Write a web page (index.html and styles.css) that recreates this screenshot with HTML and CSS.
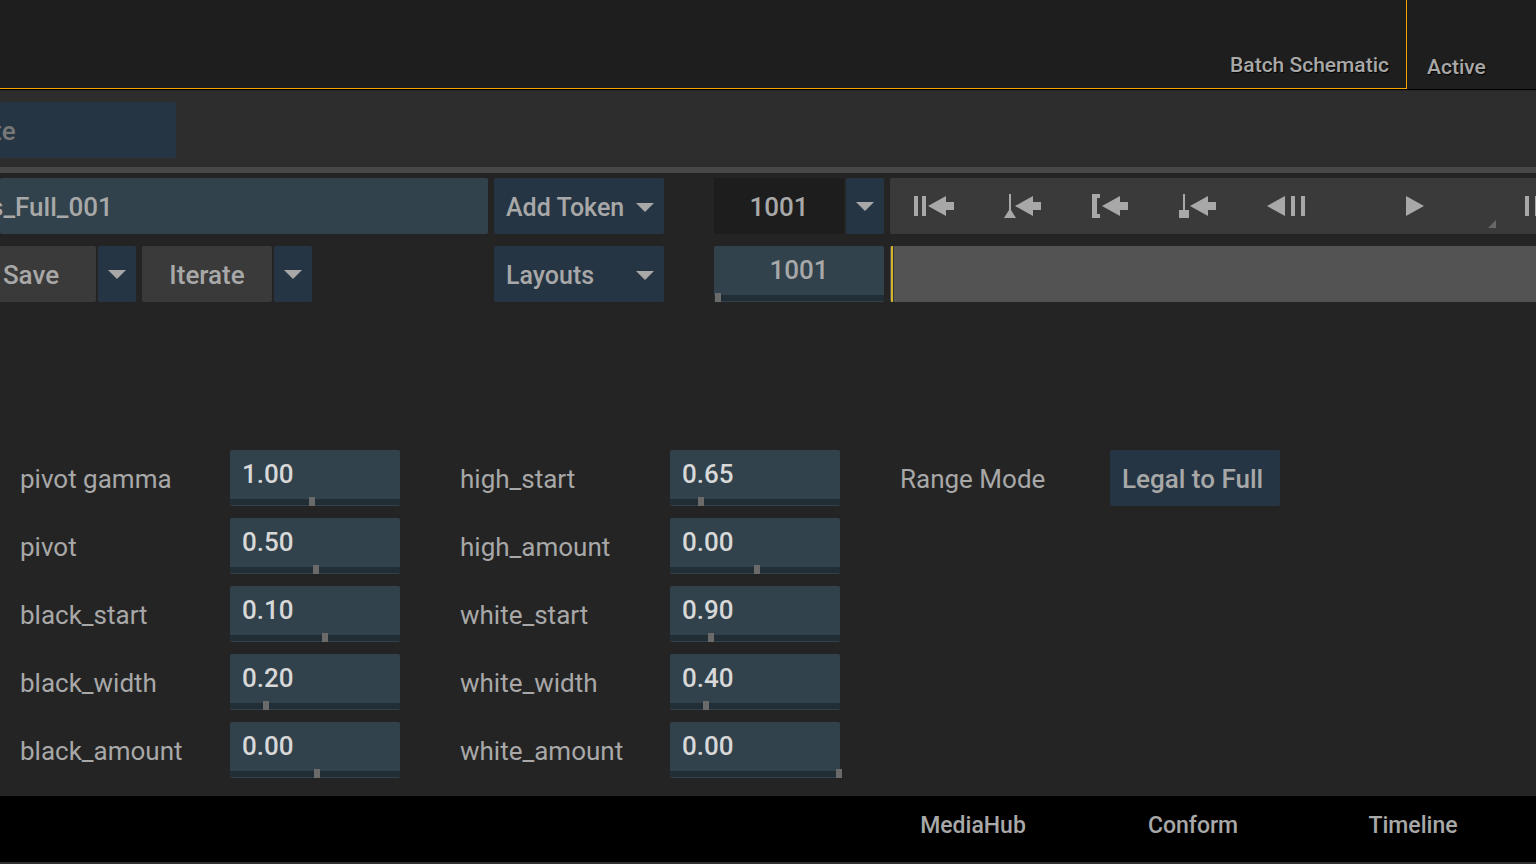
FILE: index.html
```html
<!DOCTYPE html>
<html lang="en">
<head>
    <meta charset="utf-8">
    <title>Batch Schematic</title>
    <link rel="stylesheet" href="styles.css">
</head>
<body>

    <div class="views">
        <div class="view view-current"><span>Batch Schematic</span></div>
        <div class="view view-active"><span>Active</span></div>
    </div>

    <div class="node-bar">
        <button class="node-button" type="button"><span>te</span></button>
    </div>

    <main class="panel">
        <div class="toolbar">
            <div class="left">
                <input class="name" type="text" value="s_Full_001" aria-label="Name">
            </div>
            <div class="dropdown">
                <select aria-label="Add Token"><option>Add Token</option></select>
            </div>
            <div class="frame">
                <input class="frame-start" type="text" value="1001" aria-label="Start frame">
                <button class="arrow" type="button" aria-label="Frame options"></button>
            </div>
            <div class="transport">
                <button type="button" aria-label="Go to start">
                    <svg width="44" height="28" viewBox="0 0 44 28"><path d="M2 4h4v20H2zM10 4h4v20h-4zM16 14L34 4v6h8v8h-8v6z"/></svg>
                </button>
                <button type="button" aria-label="Previous mark">
                    <svg width="44" height="28" viewBox="0 0 44 28"><path d="M9 2h2v16l5 8H4l5-8zM15 14L33 4v6h8v8h-8v6z"/></svg>
                </button>
                <button type="button" aria-label="Go to in point">
                    <svg width="44" height="28" viewBox="0 0 44 28"><path d="M4 2h8v4H9v16h3v4H4zM14 14L32 4v6h8v8h-8v6z"/></svg>
                </button>
                <button type="button" aria-label="Previous keyframe">
                    <svg width="44" height="28" viewBox="0 0 44 28"><path d="M7 2h2v16h4v8H3v-8h4zM14 14L32 4v6h8v8h-8v6z"/></svg>
                </button>
                <button type="button" aria-label="Step back">
                    <svg width="44" height="28" viewBox="0 0 44 28"><path d="M3 14L21 4v20zM27 4h4v20h-4zM37 4h4v20h-4z"/></svg>
                </button>
                <button class="play" type="button" aria-label="Play">
                    <svg width="44" height="28" viewBox="0 0 44 28"><path d="M13 4l18 10-18 10z"/></svg>
                </button>
                <button type="button" aria-label="Step forward">
                    <svg width="44" height="28" viewBox="0 0 44 28"><path d="M3 4h4v20H3zM13 4h4v20h-4zM41 14L23 4v20z"/></svg>
                </button>
            </div>
        </div>

        <div class="toolbar">
            <div class="left">
                <button class="grey save" type="button">Save</button>
                <button class="arrow" type="button" aria-label="Save options"></button>
                <button class="grey iterate" type="button">Iterate</button>
                <button class="arrow" type="button" aria-label="Iterate options"></button>
            </div>
            <div class="dropdown">
                <select aria-label="Layouts"><option>Layouts</option></select>
            </div>
            <div class="frame">
                <div class="field current">
                    <input type="text" value="1001" aria-label="Current frame">
                    <input type="range" min="0" max="166" value="1" aria-label="Frame slider">
                </div>
            </div>
            <div class="timeline"></div>
        </div>

        <div class="params">
            <div class="group">
                <label for="pivot-gamma">pivot gamma</label>
                <div class="field">
                    <input type="text" id="pivot-gamma" value="1.00">
                    <input type="range" min="0" max="166" value="79" aria-label="pivot gamma slider">
                </div>
                <label for="pivot">pivot</label>
                <div class="field">
                    <input type="text" id="pivot" value="0.50">
                    <input type="range" min="0" max="166" value="83" aria-label="pivot slider">
                </div>
                <label for="black-start">black_start</label>
                <div class="field">
                    <input type="text" id="black-start" value="0.10">
                    <input type="range" min="0" max="166" value="92" aria-label="black_start slider">
                </div>
                <label for="black-width">black_width</label>
                <div class="field">
                    <input type="text" id="black-width" value="0.20">
                    <input type="range" min="0" max="166" value="33" aria-label="black_width slider">
                </div>
                <label for="black-amount">black_amount</label>
                <div class="field">
                    <input type="text" id="black-amount" value="0.00">
                    <input type="range" min="0" max="166" value="84" aria-label="black_amount slider">
                </div>
            </div>

            <div class="group">
                <label for="high-start">high_start</label>
                <div class="field">
                    <input type="text" id="high-start" value="0.65">
                    <input type="range" min="0" max="166" value="28" aria-label="high_start slider">
                </div>
                <label for="high-amount">high_amount</label>
                <div class="field">
                    <input type="text" id="high-amount" value="0.00">
                    <input type="range" min="0" max="166" value="84" aria-label="high_amount slider">
                </div>
                <label for="white-start">white_start</label>
                <div class="field">
                    <input type="text" id="white-start" value="0.90">
                    <input type="range" min="0" max="166" value="38" aria-label="white_start slider">
                </div>
                <label for="white-width">white_width</label>
                <div class="field">
                    <input type="text" id="white-width" value="0.40">
                    <input type="range" min="0" max="166" value="33" aria-label="white_width slider">
                </div>
                <label for="white-amount">white_amount</label>
                <div class="field">
                    <input type="text" id="white-amount" value="0.00">
                    <input type="range" min="0" max="166" value="166" aria-label="white_amount slider">
                </div>
            </div>

            <div class="group">
                <label for="range-mode">Range Mode</label>
                <select id="range-mode"><option>Legal to Full</option></select>
            </div>
        </div>
    </main>

    <nav class="tabs">
        <a href="#mediahub">MediaHub</a>
        <a href="#conform">Conform</a>
        <a href="#timeline">Timeline</a>
    </nav>

</body>
</html>
```
FILE: styles.css
```css
* {
    box-sizing: border-box;
}
body {
    margin: 0;
    min-height: 100vh;
    display: flex;
    flex-direction: column;
    overflow: hidden;
    background: #242424;
    color: #a8a8a8;
    font-family: Roboto, "Noto Sans", sans-serif;
    font-size: 26px;
}
button, input, select {
    margin: 0;
    padding: 0;
    border: 0;
    border-radius: 2px;
    color: inherit;
    font-family: inherit;
    font-size: 26px;
    font-weight: 500;
}
select {
    appearance: none;
    width: 170px;
    height: 56px;
    padding: 2px 0 0 12px;
    background: #263543;
}

/* viewports */
.views {
    display: flex;
    height: 90px;
    background: #1e1e1e;
    border-bottom: 1px solid #000;
    font-size: 21px;
    font-weight: 500;
    text-shadow: 1px 1px 1px #000;
}
.view {
    display: flex;
    align-items: flex-end;
}
.view-current {
    flex: 1;
    justify-content: flex-end;
    padding: 0 17px 11px 0;
    border-right: 1px solid #f5a300;
    border-bottom: 1px solid #f5a300;
}
.view-active {
    width: 129px;
    padding: 0 0 10px 20px;
}

.node-bar {
    height: 83px;
    padding-top: 11px;
    background: #2d2d2d;
    border-top: 1px solid #242424;
    border-bottom: 6px solid #484848;
}
.node-button {
    display: block;
    width: 176px;
    height: 56px;
    padding-top: 2px;
    overflow: hidden;
    background: #263543;
    color: #777;
    text-align: left;
}
.node-button span {
    margin-left: -7px;
}

/* toolbars */
.panel {
    flex: 1;
    padding-top: 5px;
}
.toolbar {
    display: flex;
    height: 56px;
    margin-bottom: 12px;
}
.left {
    display: flex;
    flex: none;
    width: 488px;
    margin-right: 6px;
    overflow: hidden;
}
.name {
    width: 100%;
    padding-top: 2px;
    background: #31424c;
    text-indent: -10px;
}
.grey {
    width: 130px;
    margin-right: 2px;
    padding-top: 2px;
    background: #3a3a3a;
}
.save {
    margin-left: -34px;
}
.arrow {
    display: flex;
    align-items: center;
    justify-content: center;
    width: 38px;
    margin-right: 6px;
    background: #263543;
}
.arrow::before, .dropdown::after {
    content: "";
    border: 9px solid transparent;
    border-top-color: #a8a8a8;
    border-bottom: 0;
}
.dropdown {
    position: relative;
    flex: none;
    margin-right: 50px;
}
.dropdown select {
    font-size: 25px;
}
.dropdown::after {
    position: absolute;
    top: 25px;
    right: 10px;
    pointer-events: none;
}
.frame {
    display: flex;
    flex: none;
    width: 170px;
    margin-right: 6px;
}
.frame .arrow {
    margin-right: 0;
}
.frame-start {
    width: 130px;
    margin-right: 2px;
    padding-top: 2px;
    background: #1d1d1d;
    text-align: center;
}
.transport {
    display: flex;
    flex: 1;
    min-width: 0;
    overflow: hidden;
    background: #3a3a3a;
    border-radius: 2px 0 0 2px;
}
.transport button {
    display: flex;
    align-items: center;
    justify-content: center;
    flex: none;
    width: 88px;
    background: none;
}
.transport svg {
    fill: #a8a8a8;
}
.transport .play {
    position: relative;
    width: 170px;
}
.play::after {
    content: "";
    position: absolute;
    right: 4px;
    bottom: 6px;
    border-bottom: 8px solid #686868;
    border-left: 8px solid transparent;
}
.timeline {
    flex: 1;
    background: linear-gradient(to right, #535353 1px, #d2b42f 1px, #d2b42f 3px, #333 3px, #333 4px, #535353 4px);
    border-radius: 2px 0 0 2px;
}

/* value with a slider under it */
.field {
    display: flex;
    flex-direction: column;
    width: 170px;
    height: 56px;
    background: #222e36;
    border-bottom: 1px solid #31424c;
    border-radius: 2px;
}
.field input {
    flex: none;
}
.field input[type="text"] {
    width: 100%;
    height: 49px;
    padding: 0 0 2px 12px;
    background: #31424c;
    border-radius: 2px 2px 0 0;
    color: #d8d8d8;
}
.field.current input[type="text"] {
    padding-left: 0;
    color: #a8a8a8;
    text-align: center;
}
.field input[type="range"] {
    appearance: none;
    width: calc(100% + 2px);
    height: 9px;
    margin-top: -2px;
    background: none;
}
.field input[type="range"]::-webkit-slider-thumb {
    appearance: none;
    width: 6px;
    height: 9px;
    background: #6a6a6a;
}

/* parameters */
.params {
    display: flex;
    align-items: flex-start;
    gap: 60px;
    padding: 136px 20px 18px;
}
.group {
    display: grid;
    grid-template-columns: 210px 170px;
    row-gap: 12px;
    align-items: center;
}
.group label {
    padding-top: 2px;
}

.tabs {
    display: flex;
    justify-content: flex-end;
    height: 68px;
    padding-right: 13px;
    background: #000;
    border-bottom: 2px solid #303030;
}
.tabs a {
    width: 220px;
    padding-top: 15px;
    color: #a8a8a8;
    font-size: 23px;
    font-weight: 500;
    line-height: 30px;
    text-align: center;
    text-decoration: none;
}
```
